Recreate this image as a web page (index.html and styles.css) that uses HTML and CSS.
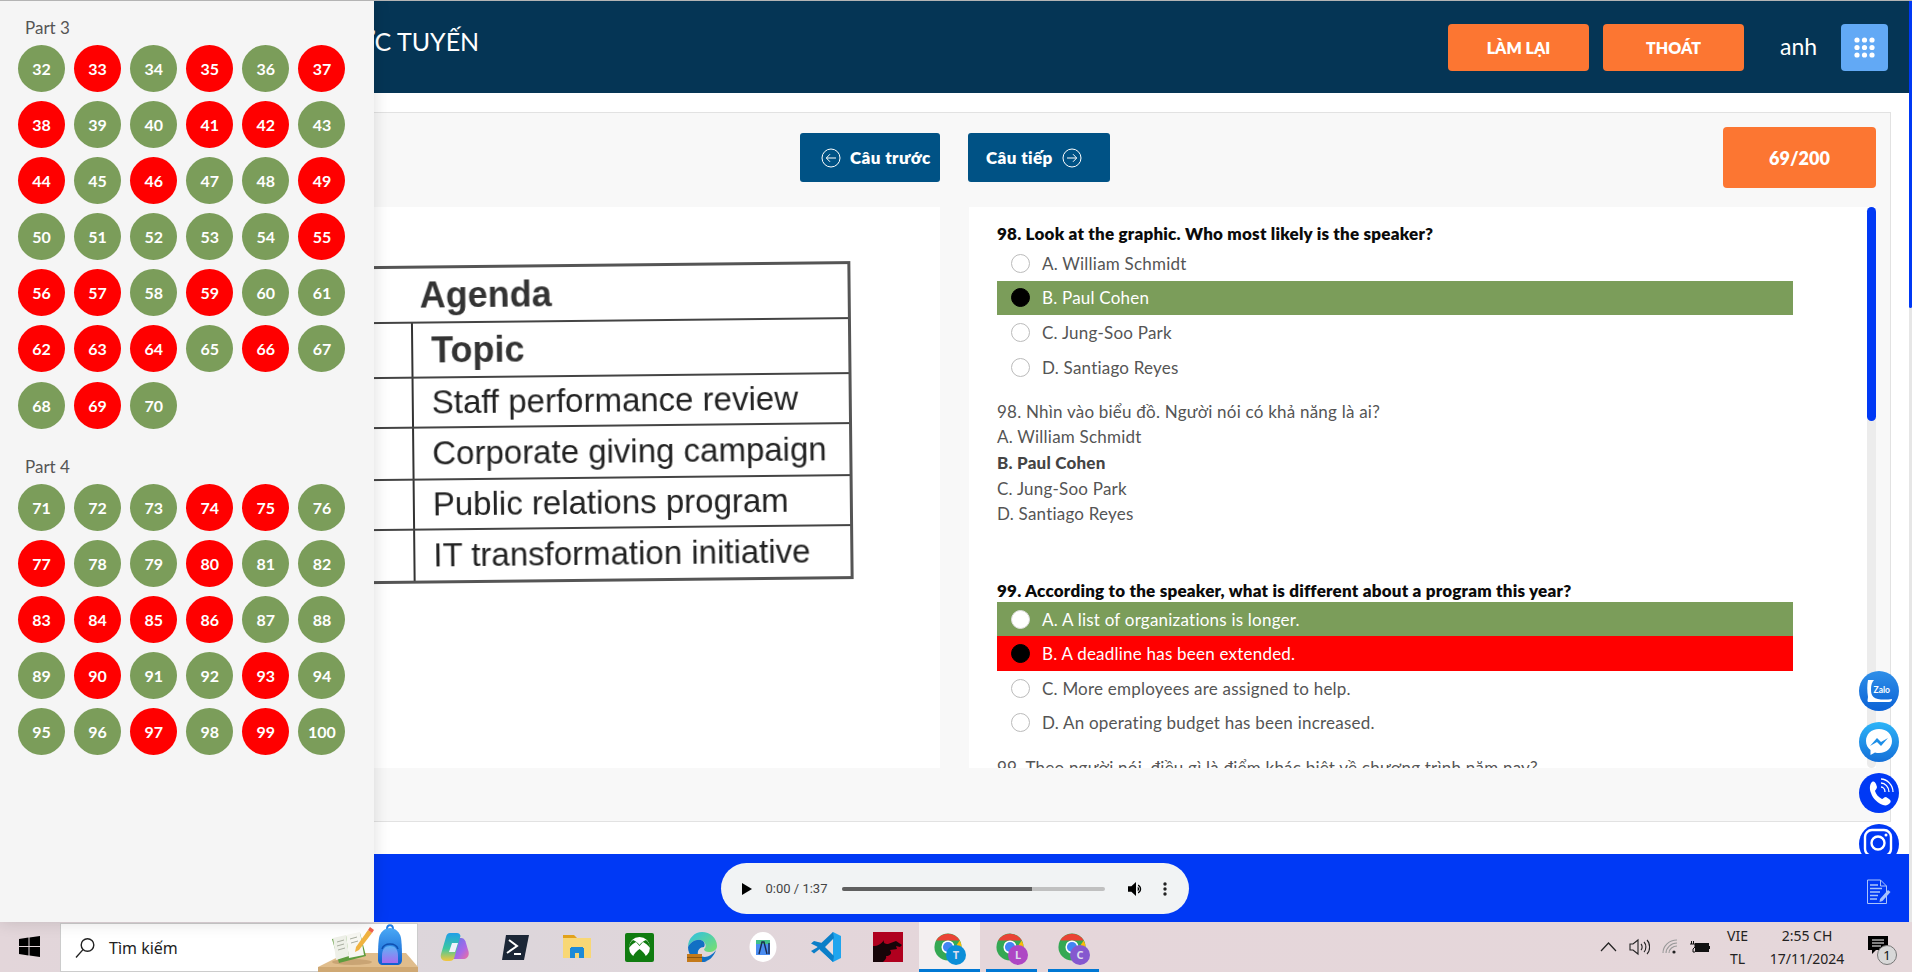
FILE: index.html
```html
<!DOCTYPE html>
<html lang="vi">
<head>
<meta charset="utf-8">
<title>Thi trực tuyến</title>
<link rel="stylesheet" href="styles.css">
</head>
<body>
<div class="screen">
  <div class="page">
    <div class="content">
      <header class="topbar">
        <div class="brand">THI TRỰC TUYẾN</div>
        <button class="btn-orange">LÀM LẠI</button>
        <button class="btn-orange">THOÁT</button>
        <div class="user">anh</div>
        <button class="btn-grid" aria-label="menu">
          <svg width="21" height="21" viewBox="0 0 21 21" fill="#fff"><circle cx="3" cy="3" r="2.6"/><circle cx="10.5" cy="3" r="2.6"/><circle cx="18" cy="3" r="2.6"/><circle cx="3" cy="10.5" r="2.6"/><circle cx="10.5" cy="10.5" r="2.6"/><circle cx="18" cy="10.5" r="2.6"/><circle cx="3" cy="18" r="2.6"/><circle cx="10.5" cy="18" r="2.6"/><circle cx="18" cy="18" r="2.6"/></svg>
        </button>
      </header>
      <main class="main">
        <section class="card">
          <div class="tool-left">
            <button class="btn-nav btn-prev">
              <svg width="20" height="20" viewBox="0 0 20 20" fill="none" stroke="#fff" stroke-width="1"><circle cx="10" cy="10" r="9"/><path d="M15 10H5.5M9 6.2 5.3 10 9 13.8"/></svg>
              Câu trước
            </button>
          </div>
          <div class="tool-right">
            <button class="btn-nav btn-next">
              Câu tiếp
              <svg width="20" height="20" viewBox="0 0 20 20" fill="none" stroke="#fff" stroke-width="1"><circle cx="10" cy="10" r="9"/><path d="M5 10h9.5M11 6.2 14.7 10 11 13.8"/></svg>
            </button>
            <div class="counter">69/200</div>
          </div>
          <div class="pane-image">
            <div class="agenda">
              <div class="ag-row ag-h1"><span class="ag-head">Agenda</span></div>
              <div class="ag-row ag-h2"><span class="ag-bold">Topic</span></div>
              <div class="ag-row ag-h3"><span class="ag-cell">Staff performance review</span></div>
              <div class="ag-row ag-h4"><span class="ag-cell">Corporate giving campaign</span></div>
              <div class="ag-row ag-h5"><span class="ag-cell">Public relations program</span></div>
              <div class="ag-row ag-h6"><span class="ag-cell">IT transformation initiative</span></div>
            </div>
          </div>
          <div class="pane-questions">
            <div class="questions">
              <div class="q-title">98. Look at the graphic. Who most likely is the speaker?</div>
              <div class="opt"><span class="radio"></span>A. William Schmidt</div>
              <div class="opt opt-green"><span class="radio radio-on"></span>B. Paul Cohen</div>
              <div class="opt"><span class="radio"></span>C. Jung-Soo Park</div>
              <div class="opt"><span class="radio"></span>D. Santiago Reyes</div>
              <div class="trans">
                <p>98. Nhìn vào biểu đồ. Người nói có khả năng là ai?</p>
                <p>A. William Schmidt</p>
                <p class="strong">B. Paul Cohen</p>
                <p>C. Jung-Soo Park</p>
                <p>D. Santiago Reyes</p>
              </div>
              <div class="q-title q-second">99. According to the speaker, what is different about a program this year?</div>
              <div class="opt opt-green"><span class="radio radio-white"></span>A. A list of organizations is longer.</div>
              <div class="opt opt-red"><span class="radio radio-on"></span>B. A deadline has been extended.</div>
              <div class="opt"><span class="radio"></span>C. More employees are assigned to help.</div>
              <div class="opt"><span class="radio"></span>D. An operating budget has been increased.</div>
              <div class="trans trans-next">
                <p>99. Theo người nói, điều gì là điểm khác biệt về chương trình năm nay?</p>
              </div>
            </div>
            <div class="qscroll"><div class="qthumb"></div></div>
          </div>
        </section>
      </main>
      <footer class="playerbar">
        <div class="player">
          <svg class="p-play" width="10" height="12" viewBox="0 0 10 12"><path d="M0 0l10 6-10 6z"/></svg>
          <span class="p-time">0:00 / 1:37</span>
          <div class="p-track"><div class="p-fill"></div></div>
          <svg class="p-vol" width="16" height="16" viewBox="0 0 16 16"><path d="M0 5.3v5.4h3.4L8 15V1L3.4 5.3z"/><path d="M10 3.5c2 .8 3.2 2.5 3.2 4.5s-1.200 3.700-3.200 4.500V11c1.100-.6 1.800-1.700 1.800-3s-.7-2.400-1.800-3z"/><path d="M9.700 5.700c.9.500 1.500 1.300 1.500 2.300s-.6 1.800-1.500 2.300z"/></svg>
          <svg class="p-more" width="4" height="14" viewBox="0 0 4 14"><circle cx="2" cy="2" r="1.700"/><circle cx="2" cy="7" r="1.700"/><circle cx="2" cy="12" r="1.700"/></svg>
        </div>
        <svg class="doc-ic" width="26" height="26" viewBox="0 0 26 26" fill="none" stroke="#a9c3fb" stroke-width="1"><path d="M1.500 1h13l6 6v17.500h-19z"/><path d="M14.500 1v6h6"/><path d="M4 6h8M4 9.500h12M4 13h10M4 16.500h8M4 20h7" stroke-width="1.400"/><path d="M14 20l8-9 2.500 2-8 9-3 1z" fill="#a9c3fb" stroke="none"/></svg>
      </footer>
    </div>
    <div class="pagebar"><div class="pagebar-thumb"></div></div>
  </div>

  <footer class="taskbar">
    <svg class="tb-win" width="21" height="21" viewBox="0 0 21 21" fill="#000"><path d="M0 3l9.500-1.400V10H0zM10.500 1.400 21 0v10H10.500zM0 11h9.500v8.400L0 18zM10.500 11H21v10l-10.500-1.500z"/></svg>
    <div class="tb-search">
      <svg width="20" height="22" viewBox="0 0 20 22" fill="none" stroke="#222" stroke-width="1.400"><circle cx="12.500" cy="8" r="6.300"/><path d="M8 12.600 1 20.500"/></svg>
      <span class="tb-search-text">Tìm kiếm</span>
      <div class="tb-widget">
        <svg width="100" height="48" viewBox="0 0 100 48"><defs><linearGradient id="bag" x1="0" y1="0" x2="0" y2="1"><stop offset="0" stop-color="#4aa8f5"/><stop offset="1" stop-color="#0f5fd0"/></linearGradient><linearGradient id="pocket" x1="0" y1="0" x2="0" y2="1"><stop offset="0" stop-color="#5fb4f5"/><stop offset="1" stop-color="#a46cf0"/></linearGradient></defs><path d="M28 29h60l12 14v5H0v-5z" fill="#e0bd8c"/><path d="M0 43h100v5H0z" fill="#cfa873"/><ellipse cx="34" cy="38" rx="20" ry="3" fill="#c9a474"/><path d="M14 15l28-6 6 23-27 7z" fill="#5f9d3e"/><path d="M15 14l13-3 3 21-13 4z" fill="#eef0e8"/><path d="M28 11l14-3 4 23-15 3z" fill="#f7f7f2"/><path d="M19 18l7-2M19 22l7-2M20 26l7-2M32 15l7-2M33 19l7-2" stroke="#a9aea0" stroke-width="1"/><path d="M38 23l12-17 4 3-13 17-4 2z" fill="#f0b340"/><path d="M50 6l2-3 4 3-2 3z" fill="#f0604a"/><path d="M69 5c0-5 6-5 6 0" fill="none" stroke="#1c7de8" stroke-width="2"/><path d="M61 14c1-6 6-10 11-10s10 4 11 10c1 7 1 16 1 22 0 3-2 5-5 5H65c-3 0-5-2-5-5 0-6 0-15 1-22z" fill="url(#bag)"/><path d="M64 32c0-7 3-10 8-10s8 3 8 10v7H64z" fill="url(#pocket)"/><path d="M64 25c1-3 4-5 8-5s7 2 8 5" fill="none" stroke="#0f4fb0" stroke-width="1.500"/></svg>
      </div>
    </div>
    <div class="tb-apps">
      <span class="tb-app"><svg width="30" height="30" viewBox="0 0 30 30"><defs><linearGradient id="cpa" x1="0" y1="0" x2="0" y2="1"><stop offset="0" stop-color="#1f9fe8"/><stop offset=".55" stop-color="#3cc8a0"/><stop offset="1" stop-color="#f5c63c"/></linearGradient><linearGradient id="cpb" x1="0" y1="0" x2="1" y2="1"><stop offset="0" stop-color="#5a78e8"/><stop offset=".6" stop-color="#a868e8"/><stop offset="1" stop-color="#f0709c"/></linearGradient></defs><path d="M18 6h4c2 0 3.500 1 4.500 3.500l3 10c1 4.500-1.500 7.500-5.500 7.500h-10z" fill="url(#cpb)"/><path d="M11 1h7c2 0 3 1 3.500 3l-6 21c-.6 2.500-2 4-5 4H7c-4 0-6-3-5-7L7 5c.6-2.500 2-4 4-4z" fill="url(#cpa)"/><path d="M13 11h6l-3 9h-6z" fill="#eef2fb"/></svg></span>
      <span class="tb-app"><svg width="29" height="27" viewBox="0 0 29 27"><path d="M5 1h23l-5 25H1z" fill="#1b2636"/><path d="M8 6l8 6-10 7" fill="none" stroke="#fff" stroke-width="2"/><path d="M13 20h7" stroke="#fff" stroke-width="2"/></svg></span>
      <span class="tb-app"><svg width="28" height="28" viewBox="0 0 28 28"><path d="M0 2h11l3 3H0z" fill="#e2a21a"/><path d="M0 5h28v20H0z" fill="#f8d775"/><path d="M7 25V15h14v10h-5v-5h-4v5z" fill="#1b8ad8"/><path d="M8 14h12v3H8z" fill="#1b8ad8"/></svg></span>
      <span class="tb-app"><svg width="29" height="29" viewBox="0 0 29 29"><rect width="29" height="29" rx="2" fill="#107c10"/><circle cx="14.500" cy="14.500" r="10.500" fill="#fff"/><path d="M8 7c3 1 5 3 6.500 5C16 10 18 8 21 7c3 2 4 5 4 8-2-3-5-5-7-6l-3.500 4-3.500-4c-2 1-5 3-7 6 0-3 1-6 4-8zM14.500 16c-3 2-6 5-6.500 8 2 1 4 1.500 6.500 1.500s4.500-.5 6.500-1.500c-.5-3-3.500-6-6.500-8z" fill="#107c10"/></svg></span>
      <span class="tb-app"><svg width="30" height="30" viewBox="0 0 30 30"><defs><linearGradient id="edg" x1="0" y1="0" x2="1" y2="1"><stop offset="0" stop-color="#2cc0e6"/><stop offset="1" stop-color="#7be06a"/></linearGradient></defs><path d="M1 15C1 6 8 0 15 0c8 0 15 6 15 14 0 4-4 6-8 6-3 0-5-1-5-3 2-1 3-5-1-8-5-3-12 0-15 6z" fill="url(#edg)"/><path d="M1 15c3-6 10-9 15-6 2 2 2 4 1 6-4 0-7 3-6 8 1 4 5 6 9 7-1 0-3 0-5 0C7 30 1 23 1 15z" fill="#1270c4"/><path d="M14 24c4 2 10 1 15-6-2 7-8 12-14 12z" fill="#1270c4"/><path d="M0 22h15v8H0z" fill="#c47a1a"/><path d="M0 25h15v1H0z" fill="#8a5510"/></svg></span>
      <span class="tb-app"><svg width="28" height="30" viewBox="0 0 28 30"><ellipse cx="14" cy="15" rx="13.500" ry="15" fill="#fff"/><path d="M7 8h14v15H7z" fill="#4a8cf0"/><path d="M7 8h14v4H7z" fill="#3fbf8a"/><path d="M10 22l3-12 2 0 3 12M20 11v11" stroke="#1a2a50" stroke-width="1.400" fill="none"/></svg></span>
      <span class="tb-app"><svg width="30" height="30" viewBox="0 0 30 30"><path d="M22 0l8 4v22l-8 4-13-12 5-4z" fill="#1fa5ee"/><path d="M22 6v18L11 15z" fill="#e8dcdf"/><path d="M22 0 6 15l16 15 1-6-9-9 9-9z" fill="#0c7fc8"/><path d="M3 9 0 11.500 7 15 0 19l3 2.500L15 12z" fill="#0c7fc8"/></svg></span>
      <span class="tb-app"><svg width="30" height="30" viewBox="0 0 30 30"><rect width="30" height="30" fill="#b0001e"/><path d="M0 30V14c5 0 8-2 11-6-1 3 1 4 4 4l8-3 6 4-2 2-4-1 1 3-7 1c3 4-1 6-4 6 1 2-1 4-3 6z" fill="#160408"/></svg></span>
      <span class="tb-chrome tb-chrome-active">
        <span class="chrome-ic"><svg width="28" height="28" viewBox="0 0 32 32"><circle cx="16" cy="16" r="15.500" fill="#34a853"/><path d="M2.600 8.500a15.500 15.500 0 0 1 26.800 0H16z" fill="#ea4335"/><path d="M29.400 8.500A15.500 15.500 0 0 1 16 31.500l7-13.500z" fill="#fbbc05"/><circle cx="16" cy="16" r="7.500" fill="#fff"/><circle cx="16" cy="16" r="5.800" fill="#4285f4"/></svg><span class="chrome-b b-blue">T</span></span>
      </span>
      <span class="tb-chrome">
        <span class="chrome-ic"><svg width="28" height="28" viewBox="0 0 32 32"><circle cx="16" cy="16" r="15.500" fill="#34a853"/><path d="M2.600 8.500a15.500 15.500 0 0 1 26.800 0H16z" fill="#ea4335"/><path d="M29.400 8.500A15.500 15.500 0 0 1 16 31.500l7-13.500z" fill="#fbbc05"/><circle cx="16" cy="16" r="7.500" fill="#fff"/><circle cx="16" cy="16" r="5.800" fill="#4285f4"/></svg><span class="chrome-b b-pink">L</span></span>
      </span>
      <span class="tb-chrome">
        <span class="chrome-ic"><svg width="28" height="28" viewBox="0 0 32 32"><circle cx="16" cy="16" r="15.500" fill="#34a853"/><path d="M2.600 8.500a15.500 15.500 0 0 1 26.800 0H16z" fill="#ea4335"/><path d="M29.400 8.500A15.500 15.500 0 0 1 16 31.500l7-13.500z" fill="#fbbc05"/><circle cx="16" cy="16" r="7.500" fill="#fff"/><circle cx="16" cy="16" r="5.800" fill="#4285f4"/></svg><span class="chrome-b b-purple">C</span></span>
      </span>
    </div>
    <div class="tb-tray">
      <svg width="17" height="10" viewBox="0 0 17 10" fill="none" stroke="#222" stroke-width="1.200"><path d="M1 9l7.500-8L16 9"/></svg>
      <svg width="21" height="18" viewBox="0 0 21 18" fill="none" stroke="#222" stroke-width="1.100"><path d="M1 6v6h3l5 4V2L4 6z"/><path d="M12 6c1.500 1.500 1.500 4.500 0 6M15 4c2.500 2.500 2.500 7.500 0 10M18 2c3.500 3.500 3.500 10.500 0 14"/></svg>
      <svg width="16" height="16" viewBox="0 0 16 16" fill="none" stroke="#999" stroke-width="1.100"><path d="M1 14C1 7 7 1 15 1M4 14c0-5 5-10 11-10M7 14c0-4 4-7 8-7"/><circle cx="12" cy="13" r="1.600" fill="#222" stroke="none"/></svg>
      <svg width="20" height="13" viewBox="0 0 20 13"><rect x="5" y="2" width="14" height="9" fill="#111"/><path d="M19 5h1v3h-1z" fill="#111"/><path d="M1.500 0v3M3.500 0v3M0 3h5v3L3 8v3h2" fill="none" stroke="#111" stroke-width="1"/></svg>
    </div>
    <div class="tb-lang"><span>VIE</span><span>TL</span></div>
    <div class="tb-clock"><span>2:55 CH</span><span>17/11/2024</span></div>
    <div class="tb-notif">
      <svg width="20" height="18" viewBox="0 0 20 18"><path d="M0 0h20v14H8l-4 4v-4H0z" fill="#000"/><path d="M4 4h12M4 7h12M4 10h9" stroke="#fff"/></svg>
      <span class="tb-badge">1</span>
    </div>
  </footer>

  <aside class="sidebar">
    <div class="part">
      <div class="part-label">Part 3</div>
      <div class="num-grid">
        <span class="num g">32</span><span class="num r">33</span><span class="num g">34</span><span class="num r">35</span><span class="num g">36</span><span class="num r">37</span>
        <span class="num r">38</span><span class="num g">39</span><span class="num g">40</span><span class="num r">41</span><span class="num r">42</span><span class="num g">43</span>
        <span class="num r">44</span><span class="num g">45</span><span class="num r">46</span><span class="num g">47</span><span class="num g">48</span><span class="num r">49</span>
        <span class="num g">50</span><span class="num g">51</span><span class="num g">52</span><span class="num g">53</span><span class="num g">54</span><span class="num r">55</span>
        <span class="num r">56</span><span class="num r">57</span><span class="num g">58</span><span class="num r">59</span><span class="num g">60</span><span class="num g">61</span>
        <span class="num r">62</span><span class="num r">63</span><span class="num r">64</span><span class="num g">65</span><span class="num r">66</span><span class="num g">67</span>
        <span class="num g">68</span><span class="num r">69</span><span class="num g">70</span>
      </div>
    </div>
    <div class="part">
      <div class="part-label">Part 4</div>
      <div class="num-grid">
        <span class="num g">71</span><span class="num g">72</span><span class="num g">73</span><span class="num r">74</span><span class="num r">75</span><span class="num g">76</span>
        <span class="num r">77</span><span class="num g">78</span><span class="num g">79</span><span class="num r">80</span><span class="num g">81</span><span class="num g">82</span>
        <span class="num r">83</span><span class="num r">84</span><span class="num r">85</span><span class="num r">86</span><span class="num g">87</span><span class="num g">88</span>
        <span class="num g">89</span><span class="num r">90</span><span class="num g">91</span><span class="num g">92</span><span class="num r">93</span><span class="num g">94</span>
        <span class="num g">95</span><span class="num g">96</span><span class="num r">97</span><span class="num g">98</span><span class="num r">99</span><span class="num g">100</span>
      </div>
    </div>
  </aside>

  <div class="social">
    <span class="soc soc-zalo">
      <svg width="40" height="40" viewBox="0 0 40 40"><path d="M9 9h6c-2 2-3 5-3 9 0 4 .5 6 2.500 8 3 3 12 3 18.500 2 0 2-1 3-3 3H10c-1 0-1.500-.5-1.500-1.500L9 26c-1-6-1-12 0-17z" fill="#fff"/><text x="14.500" y="21.500" class="zalo-t">Zalo</text></svg>
    </span>
    <span class="soc soc-mess">
      <svg width="40" height="40" viewBox="0 0 40 40"><path d="M20 7C12 7 7 12.500 7 19c0 4 1.800 7 4.500 9v5l4.500-2.500c1.300.4 2.600.5 4 .5 8 0 13-5.500 13-12S28 7 20 7z" fill="#fff"/><path d="M11 24l7-8 4 4 7-4-7 8-4-4z" fill="#1b8ee8"/></svg>
    </span>
    <span class="soc soc-phone">
      <svg width="40" height="40" viewBox="0 0 40 40"><path d="M13 9c2-1 3 0 4 2l1 3c0 2-2 3-2 4 1 3 3 6 7 8 1 0 2-2 4-2l3 2c2 1 2 3 1 4-2 2-4 3-7 2-5-2-10-6-12-12-2-5-1-9 1-11z" fill="#fff"/><path d="M22 14c2 0 4 2 4 5M22 10c4 0 8 4 8 9M22 6c6 0 12 6 12 13" fill="none" stroke="#fff" stroke-width="1.300"/></svg>
    </span>
    <span class="soc soc-insta">
      <svg width="38" height="38" viewBox="0 0 38 38" fill="none" stroke="#fff" stroke-width="2.400"><rect x="6" y="6" width="26" height="26" rx="7"/><circle cx="19" cy="19" r="6.500"/><circle cx="27" cy="11" r="1.500" fill="#fff" stroke="none"/></svg>
    </span>
  </div>
</div>
</body>
</html>
```
FILE: styles.css
```css
* { box-sizing: border-box; }
html, body { margin: 0; padding: 0; }
body { font-family: Lato, "Noto Sans", sans-serif; color: #444; background: #fff; }
button { font-family: inherit; border: 0; cursor: pointer; }
p { margin: 0; }

.screen { position: relative; width: 1912px; height: 972px; overflow: hidden; display: flex; flex-direction: column; border-top: 1px solid #b4b4b4; }
.page { flex: 1; display: flex; min-height: 0; }
.content { flex: 1; display: flex; flex-direction: column; min-width: 0; }
.pagebar { width: 3px; background: #e6e6e6; }
.pagebar-thumb { height: 307px; background: #0039f5; border-radius: 0 0 3px 3px; }

.topbar { height: 92px; background: #053555; color: #fff; display: flex; align-items: flex-start; padding-top: 23px; }
.brand { font-size: 25px; line-height: 34px; margin-left: 277px; margin-right: auto; white-space: nowrap; }
.btn-orange { width: 141px; height: 47px; margin-right: 14px; border-radius: 4px; background: #fc7632; color: #fff; font-weight: 800; font-size: 16px; }
.user { width: 83px; padding-left: 22px; font-size: 23px; line-height: 45px; }
.btn-grid { width: 47px; height: 47px; margin-right: 21px; border-radius: 4px; background: #62a9f5; padding: 0; display: flex; align-items: center; justify-content: center; }

.main { flex: 1; min-height: 0; padding: 19px 18px 32px 20px; }
.card { height: 100%; background: #f8f8f8; border: 1px solid #e2e2e2; display: grid; grid-template-columns: 919px 907px; column-gap: 29px; grid-template-rows: 94px 561px; padding-right: 14px; }
.tool-left { display: flex; justify-content: flex-end; align-items: flex-start; padding-top: 20px; }
.tool-right { display: flex; justify-content: space-between; align-items: flex-start; padding-top: 14px; margin-left: -1px; }
.btn-nav { width: 140px; height: 49px; border-radius: 3px; background: #005285; color: #fff; font-weight: 800; font-size: 17px; letter-spacing: .4px; display: flex; align-items: center; gap: 9px; padding: 0; }
.btn-prev { padding-left: 21px; }
.btn-next { width: 142px; margin-top: 6px; padding-left: 18px; }
.counter { width: 153px; height: 61px; border-radius: 4px; background: #fc7632; color: #fff; font-weight: 800; font-size: 18px; display: flex; align-items: center; justify-content: center; }

.pane-image { background: #fff; overflow: hidden; display: flex; justify-content: flex-end; }
.agenda { width: 560px; height: 318px; margin-top: 57px; margin-right: 88px; border: 3px solid #555; transform: rotate(-0.6deg); color: #222; font-family: "Liberation Sans", Arial, sans-serif; filter: blur(0.3px); }
.ag-row { border-bottom: 2px solid #444; display: flex; align-items: center; padding-left: 137px; }
.ag-row:last-child { border-bottom: 0; }
.ag-row span { white-space: nowrap; }
.ag-h1 { height: 55px; padding-left: 126px; }
.ag-h2 { height: 55px; }
.ag-h3 { height: 50px; }
.ag-h4 { height: 52px; }
.ag-h5 { height: 50px; }
.ag-h6 { height: 50px; }
.ag-h2, .ag-h3, .ag-h4, .ag-h5, .ag-h6 { background: linear-gradient(90deg, transparent 117px, #333 117px, #333 119px, transparent 119px); }
.ag-head { font-size: 36px; font-weight: 700; color: #333; }
.ag-bold { font-size: 36px; font-weight: 700; color: #333; }
.ag-cell { font-size: 33px; }

.pane-questions { position: relative; background: #fff; overflow: hidden; padding: 14px 83px 0 28px; letter-spacing: .22px; }
.q-title { color: #0b0b0b; font-weight: 800; font-size: 17px; line-height: 25px; white-space: nowrap; }
.q-second { margin-top: 51px; margin-bottom: -1px; }
.opt { height: 34.600px; display: flex; align-items: center; padding-left: 14px; gap: 12px; font-size: 17px; color: #555; }
.opt-green { background: #7b9d5a; color: #fff; }
.opt-red { background: #ff0000; color: #fff; }
.radio { width: 19px; height: 19px; border-radius: 50%; border: 1px solid #bbb; background: #fff; flex: none; }
.radio-on { background: #000; border-color: #000; }
.radio-white { border-color: #ddd; }
.trans { margin-top: 14.500px; font-size: 17px; line-height: 25.600px; color: #555; }
.trans .strong { font-weight: 900; color: #444; }
.trans-next { margin-top: 15px; white-space: nowrap; }
.qscroll { position: absolute; right: 0; top: 0; bottom: 0; width: 9px; background: #ececec; border-radius: 5px; }
.qthumb { height: 214px; background: #0039f5; border-radius: 5px; }

.playerbar { position: relative; z-index: 3; height: 68px; background: #0039f5; display: flex; justify-content: center; align-items: flex-start; padding: 9px 0 0 0; }
.player { width: 468px; height: 51px; border-radius: 26px; background: #f1f3f4; display: flex; align-items: center; padding-left: 21px; color: #333; }
.p-play { flex: none; fill: #000; }
.p-time { margin-left: 14px; width: 76px; font-family: Roboto, sans-serif; font-size: 13px; color: #444; white-space: nowrap; }
.p-track { width: 263px; height: 4px; border-radius: 2px; background: #c0c0c0; overflow: hidden; }
.p-fill { width: 190px; height: 4px; background: #5f5f5f; }
.p-vol { margin-left: 23px; fill: #000; flex: none; }
.p-more { margin-left: 19px; fill: #222; flex: none; }
.doc-ic { position: absolute; right: 17px; top: 25px; }

.taskbar { height: 50px; flex: none; display: flex; align-items: stretch; background: linear-gradient(90deg, #e3d6da 0%, #dcd6db 25%, #e5d6da 50%, #e5d7da 100%); font-family: "Noto Sans", sans-serif; color: #222; }
.tb-win { margin: 14px 20px 0 19px; flex: none; }
.tb-search { width: 358px; margin-top: 1px; background: #fff; border: 1px solid #ccc; display: flex; align-items: center; padding-left: 14px; position: relative; }
.tb-search-text { margin-left: 14px; font-size: 16px; color: #222; }
.tb-widget { position: absolute; right: -1px; bottom: -1px; height: 48px; }
.tb-widget svg { display: block; }
.tb-apps { display: flex; align-items: center; margin-left: 21px; }
.tb-app { display: flex; width: 62px; flex: none; }
.tb-chrome { width: 51px; height: 100%; display: flex; align-items: center; justify-content: center; border-bottom: 3px solid #0078d4; margin-left: 6px; padding-top: 2px; }
.tb-chrome + .tb-chrome + .tb-chrome { margin-left: 11px; }
.tb-chrome-active { width: 61px; background: #f3eff0; margin-left: -16px; }
.chrome-ic { position: relative; display: block; width: 28px; height: 28px; margin-right: 3px; }
.chrome-ic svg { display: block; }
.chrome-b { position: absolute; right: -4px; bottom: -4px; width: 20px; height: 20px; border-radius: 50%; color: #dde; font-size: 11px; font-weight: 700; display: flex; align-items: center; justify-content: center; }
.b-blue { background: #0b8ed8; }
.b-pink { background: #ae47c4; }
.b-purple { background: #8558cf; }
.tb-tray { margin-left: auto; display: flex; align-items: center; gap: 12px; }
.tb-lang { display: flex; flex-direction: column; align-items: center; justify-content: center; gap: 4px; margin-left: 17px; width: 21px; font-size: 14px; line-height: 19px; }
.tb-clock { display: flex; flex-direction: column; align-items: center; justify-content: center; gap: 4px; width: 76px; margin-left: 21px; font-size: 14px; line-height: 19px; }
.tb-notif { position: relative; width: 20px; margin: 14px 24px 0 23px; }
.tb-notif svg { display: block; }
.tb-badge { position: absolute; left: 9px; top: 9px; width: 20px; height: 20px; border-radius: 50%; background: #d8d8d8; border: 1px solid #777; font-size: 13px; line-height: 18px; text-align: center; color: #111; }

.sidebar { position: absolute; z-index: 5; left: 0; top: 0; width: 374px; height: 921px; background: #f5f5f5; box-shadow: 0 0 16px rgba(0,0,0,.14); padding: 16px 0 0 18px; }
.part + .part { margin-top: 27px; }
.part-label { padding-left: 7px; font-size: 17px; line-height: 22px; color: #555; margin-bottom: 6px; }
.num-grid { display: grid; grid-template-columns: repeat(6, 47px); gap: 9.100px; }
.num { width: 47px; height: 47px; border-radius: 50%; display: flex; align-items: center; justify-content: center; color: #fff; font-weight: 700; font-size: 16px; }
.g { background: #7b9d5a; }
.r { background: #ff0000; }

.social { position: absolute; z-index: 2; right: 13px; top: 670px; width: 40px; display: flex; flex-direction: column; gap: 11px; }
.soc { display: block; width: 40px; height: 40px; border-radius: 50%; }
.soc svg { display: block; }
.soc-zalo { background: linear-gradient(#2f8fe8, #0b62d6); }
.soc-mess { background: linear-gradient(#2cb4f8, #1570d8); }
.soc-phone { background: #0039f5; }
.soc-insta { background: #0039f5; }
.zalo-t { font-family: Lato, sans-serif; font-size: 8.500px; font-weight: 700; fill: #fff; }
```
